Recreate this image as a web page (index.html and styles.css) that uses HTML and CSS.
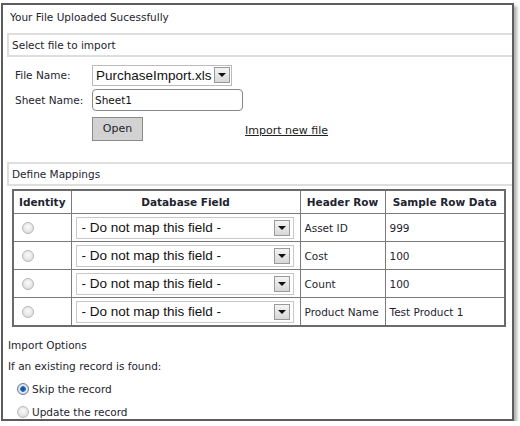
FILE: index.html
```html
<!DOCTYPE html>
<html>
<head>
<meta charset="utf-8">
<link rel="stylesheet" href="styles.css">
</head>
<body>
<div class="frame">
  <div class="title">Your File Uploaded Sucessfully</div>
  <div class="section">Select file to import</div>
  <div class="form">
    <div class="row row-file">
      <span class="label">File Name:</span>
      <div class="select select-file"><span class="sel-text">PurchaseImport.xls</span><span class="arrow"></span></div>
    </div>
    <div class="row row-sheet">
      <span class="label">Sheet Name:</span>
      <div class="textbox">Sheet1</div>
    </div>
    <div class="row row-open">
      <span class="label"></span>
      <div class="button">Open</div>
      <a class="link" href="#">Import new file</a>
    </div>
  </div>
  <div class="section section-map">Define Mappings</div>
  <table class="map">
    <colgroup>
      <col class="w-id"><col class="w-db"><col class="w-hr"><col class="w-sd">
    </colgroup>
    <thead>
      <tr><th>Identity</th><th>Database Field</th><th>Header Row</th><th>Sample Row Data</th></tr>
    </thead>
    <tbody>
      <tr><td class="c-id"><span class="radio"></span></td><td class="c-db"><div class="select select-map"><span class="sel-text">- Do not map this field -</span><span class="arrow"></span></div></td><td>Asset ID</td><td>999</td></tr>
      <tr><td class="c-id"><span class="radio"></span></td><td class="c-db"><div class="select select-map"><span class="sel-text">- Do not map this field -</span><span class="arrow"></span></div></td><td>Cost</td><td>100</td></tr>
      <tr><td class="c-id"><span class="radio"></span></td><td class="c-db"><div class="select select-map"><span class="sel-text">- Do not map this field -</span><span class="arrow"></span></div></td><td>Count</td><td>100</td></tr>
      <tr><td class="c-id"><span class="radio"></span></td><td class="c-db"><div class="select select-map"><span class="sel-text">- Do not map this field -</span><span class="arrow"></span></div></td><td>Product Name</td><td>Test Product 1</td></tr>
    </tbody>
  </table>
  <div class="options">
    <div class="opt-title">Import Options</div>
    <div class="opt-q">If an existing record is found:</div>
    <div class="opt"><span class="radio on"></span>Skip the record</div>
    <div class="opt"><span class="radio"></span>Update the record</div>
  </div>
</div>
</body>
</html>
```
FILE: styles.css
```css
html, body {
  margin: 0;
  padding: 0;
  background: #fff;
}
body {
  font-family: "DejaVu Sans", Verdana, sans-serif;
  font-size: 10.5px;
  color: #1e2430;
}
.frame {
  box-sizing: border-box;
  margin: 3px 0 0 1px;
  width: 513px;
  height: 418px;
  border: 2px solid #5c5c5c;
  box-shadow: 3px 3px 3px rgba(0, 0, 0, 0.3);
  background: #fff;
}
.title {
  height: 28px;
  line-height: 24px;
  padding-left: 7px;
}
.section {
  box-sizing: border-box;
  margin-left: 4px;
  height: 24px;
  line-height: 20px;
  border: 2px solid #dedede;
  border-right: none;
  padding-left: 3px;
}
.form {
  display: flex;
  flex-direction: column;
  padding-left: 12px;
  padding-top: 7px;
}
.row {
  display: flex;
  align-items: center;
}
.label {
  width: 77px;
  flex: none;
}
.row-file { height: 22px; }
.row-sheet { height: 22px; margin-top: 3px; }
.row-open { height: 24px; margin-top: 6px; }
.select {
  box-sizing: border-box;
  display: flex;
  align-items: center;
  border: 1px solid #bbb;
  background: #fff;
  font-family: "Liberation Sans", Arial, sans-serif;
  color: #111;
}
.select-file {
  width: 140px;
  height: 21px;
  font-size: 13.5px;
  padding-left: 3px;
  padding-right: 1px;
}
.sel-text { flex: 1; white-space: nowrap; overflow: hidden; }
.arrow {
  position: relative;
  box-sizing: border-box;
  width: 16px;
  height: 16px;
  border: 1px solid #999;
  background: linear-gradient(#f4f4f4, #d8d8d8);
  flex: none;
}
.arrow::after {
  content: "";
  position: absolute;
  left: 3px;
  top: 5px;
  border-left: 4px solid transparent;
  border-right: 4px solid transparent;
  border-top: 4px solid #111;
}
.textbox {
  box-sizing: border-box;
  width: 151px;
  height: 22px;
  border: 1px solid #888;
  border-radius: 4px;
  padding-left: 2px;
  line-height: 20px;
  color: #111;
}
.button {
  box-sizing: border-box;
  width: 51px;
  height: 24px;
  border: 1px solid #8a8a8a;
  background: #d2d2d2;
  text-align: center;
  line-height: 22px;
  font-size: 11px;
}
.link {
  margin-left: 102px;
  color: #222;
  text-decoration: underline;
  font-size: 11px;
  margin-top: 2px;
}
.section-map {
  margin-top: 21px;
}
.map {
  table-layout: fixed;
  border-collapse: collapse;
  margin: 3px 0 0 9px;
  width: 492px;
  border: 2px solid #6a6a6a;
}
.w-id { width: 58px; }
.w-db { width: 229px; }
.w-hr { width: 85px; }
.w-sd { width: 120px; }
.map th, .map td {
  border: 1px solid #7a7a7a;
  padding: 0 4px;
  text-align: left;
  white-space: nowrap;
}
.map th {
  height: 22px;
  font-weight: bold;
  text-align: center;
  padding: 0 2px;
}
.map td { height: 27px; }
.map td.c-id { padding-left: 8px; }
.map td.c-db { padding-left: 4px; }
.select-map {
  width: 218px;
  height: 22px;
  font-size: 13.5px;
  padding-left: 5px;
  padding-right: 3px;
  border-color: #c8c8c8;
}
.radio {
  display: inline-block;
  box-sizing: border-box;
  width: 12px;
  height: 12px;
  border-radius: 50%;
  border: 1px solid #b8b8b8;
  background: radial-gradient(circle at 50% 40%, #fbfbfb, #d6d6d6);
  vertical-align: middle;
}
.radio.on {
  border-color: #6c7e92;
  background: radial-gradient(circle, #0b3e8c 0, #2d6fc4 2.5px, #e8eef5 3.2px, #c5ccd4 6px);
}
.options {
  padding-left: 5px;
  padding-top: 8px;
}
.opt-title { height: 21px; line-height: 21px; }
.opt-q { height: 21px; line-height: 21px; }
.opt {
  display: flex;
  align-items: center;
  height: 23px;
  padding-left: 9px;
}
.opt .radio { margin-right: 3px; }
```
